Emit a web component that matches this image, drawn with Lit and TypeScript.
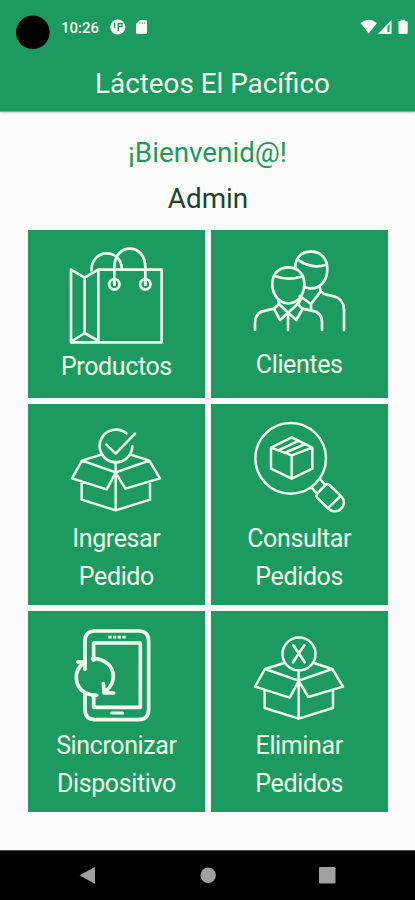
import { LitElement, html, css, svg } from "lit";
import { customElement } from "lit/decorators.js";

const bag = svg`
  <g stroke-width="8">
    <path d="M238 133H425V351H153V133L194 157L235 133V348M194 157V323M157 347L194 323L235 347"/>
    <path d="M214 135C215 70 301 66 306 131M283 165V126C283 51 376 51 376 126V165"/>
    <circle cx="283" cy="177" r="15.5"/><circle cx="376" cy="177" r="15.5"/>
    <path d="M283 164V178M376 164V178" stroke-width="9"/>
  </g>`;

const people = svg`
  <g stroke-width="8">
    <path d="M247 126C218 126 199 146 199 177C199 209 220 234 247 234C274 234 295 209 295 177C295 146 276 126 247 126Z"/>
    <path d="M207 152Q245 167 285 154"/>
    <path d="M268 131C266 99 285 79 315 79C346 79 364 101 364 131C364 164 345 189 315 189Q304 189 295 185"/>
    <path d="M275 103Q316 132 358 119"/>
    <path d="M147 314V293Q147 260 178 256L204 250L219 236L217 228M277 228L275 236L290 250L316 256Q348 260 348 290V314"/>
    <path d="M204 250L222 284L246 262L219 236M275 236L246 262L271 284L290 250M246 262V314"/>
    <path d="M341 184L344 198L315 236L281 212M315 236V252M344 198L354 206L384 213Q414 222 414 254V314M286 218L276 237"/>
  </g>`;

const box = svg`
  <path d="M244 166L186 184L156 237L260 270L287 220L316 268L420 237L388 184L332 166M186 184L287 219L388 184M185 246V301L287 333L390 301V246M287 187V333"/>`;

const boxCheck = svg`
  <g stroke-width="7.4">
    ${box}
    <path d="M319 102A49 49 0 1 0 337 141" stroke-width="8"/>
    <path d="M259 136L287 163L345 103"/>
  </g>`;

const boxCross = svg`
  <g stroke-width="7.4">
    <g transform="translate(-9 4)">${box}</g>
    <circle cx="279" cy="143" r="49.5"/>
    <path d="M262 117L296 168M295 117L261 168" stroke-width="8"/>
  </g>`;

const search = svg`
  <g stroke-width="7.4">
    <circle cx="254" cy="177" r="106"/>
    <path d="M195 145L257 114L319 145V208L257 238L195 208ZM195 145L257 168L319 145M257 168V238M217 153L279 124M235 161L298 134"/>
    <path d="M317 265L331 281M342 239L358 257"/>
    <path d="M334 283L359 256Q364 252 370 257L404 289C426 312 406 341 379 335Q374 333 368 329L333 295Q329 289 334 283ZM368 324L404 290"/>
  </g>`;

const phone = svg`
  <g stroke-width="11">
    <path d="M195 189V104Q195 74 225 74H355Q386 74 386 104V309Q386 340 355 340H225Q195 340 195 309V262"/>
    <path d="M221 162V110H361V303H221V266"/>
    <path d="M218 157C257 157 280 181 280 211Q280 235 257 254"/>
    <path d="M230 267C191 267 169 244 169 212Q169 188 190 170"/>
    <path d="M250 232L252 260H281M173 167H195V189"/>
    <path d="M252 244V260H268Z" fill="#eefff0" stroke-width="3"/>
    <path d="M275 320H308" stroke-width="9"/>
    <path d="M265 92.500H317" stroke-width="8" stroke-linecap="butt" stroke-dasharray="10 4"/>
  </g>`;

interface Tile {
  lines: string[];
  icon: unknown;
  left: number;
  variant: string;
}

const tiles: Tile[] = [
  { lines: ["Productos"], icon: bag, left: 24, variant: "products" },
  { lines: ["Clientes"], icon: people, left: 15, variant: "clients" },
  { lines: ["Ingresar", "Pedido"], icon: boxCheck, left: 24, variant: "middle" },
  { lines: ["Consultar", "Pedidos"], icon: search, left: 15, variant: "middle" },
  { lines: ["Sincronizar", "Dispositivo"], icon: phone, left: 24, variant: "bottom" },
  { lines: ["Eliminar", "Pedidos"], icon: boxCross, left: 15, variant: "bottom" },
];

@customElement("app-root")
export class AppRoot extends LitElement {
  static styles = css`
    :host {
      display: flex;
      flex-direction: column;
      height: 900px;
      width: 415px;
      overflow: hidden;
      background: #fbfbfb;
      font-family: Roboto, sans-serif;
    }
    * { box-sizing: border-box; }
    svg { display: block; }
    header {
      height: 112px;
      flex: none;
      background: #1c9a60;
      color: #f4ffee;
      border-bottom: 1px solid #68b68d;
      box-shadow: 0 1px 2px #0003;
    }
    .status { height: 56px; }
    .title {
      font-size: 27.8px;
      line-height: 56px;
      text-align: center;
      padding-left: 10px;
      white-space: nowrap;
    }
    .clock { font: 500 15px Roboto, sans-serif; fill: #f4ffee; }
    .welcome {
      height: 117.7px;
      flex: none;
      padding-top: 18px;
      text-align: center;
      font-size: 27.8px;
      line-height: 46px;
    }
    .greeting { color: #1e9a58; }
    .user { color: #1c4429; padding-left: 1px; }
    .grid {
      display: grid;
      grid-template-columns: 176.8px 176.8px;
      grid-template-rows: 168.8px 200.8px 201.2px;
      gap: 6px;
      margin-left: 28px;
      flex: 1;
      align-content: start;
    }
    .tile {
      background: #1c9a60;
      color: #f0ffe9;
      text-align: center;
      font-size: 25px;
      letter-spacing: -0.38px;
      line-height: 37.4px;
      overflow: hidden;
    }
    .icon {
      width: 177px;
      height: 115px;
      margin-bottom: 1px;
      fill: none;
      stroke: #eefff0;
      stroke-linejoin: round;
      stroke-linecap: round;
    }
    .products .icon { margin-bottom: 3px; }
    .nav {
      height: 50px;
      flex: none;
      background: #000;
      border-top: 1px solid #555;
    }
  `;

  render() {
    return html`
      <header>
        <svg class="status" width="415" height="56" fill="#f8fff4">
          <circle cx="32.8" cy="32.3" r="16.8" fill="#000" />
          <text class="clock" x="61" y="33" textLength="38" lengthAdjust="spacingAndGlyphs">10:26</text>
          <circle cx="117.8" cy="27" r="7.6" />
          <path d="M114.600 23V28M118.300 31V23.500H122V26.500H118.500" fill="none" stroke="#1c9a60" stroke-width="1.4" />
          <path d="M136 24L140 20H145.500Q147 20 147 21.500V32.500Q147 34 145.500 34H137.500Q136 34 136 32.500Z" />
          <path d="M140 22V24M142.200 22V24M144.400 22V24" stroke="#62b98c" />
          <path d="M360.500 23Q368.500 16.500 377 23L368.700 33.500Z" />
          <path d="M378 34L391.500 20V34Z" />
          <path d="M387.500 26V32H389.500V24Z" fill="#1c9a60" />
          <path d="M400.700 21H398.500V33Q398.500 34 399.500 34H406.500Q407.700 34 407.700 33V22Q407.700 21 406.500 21H405V19.700H400.700Z" />
        </svg>
        <div class="title">Lácteos El Pacífico</div>
      </header>
      <section class="welcome">
        <div class="greeting">¡Bienvenid@!</div>
        <div class="user">Admin</div>
      </section>
      <main class="grid">
        ${tiles.map(
          (t) => html`<div class="tile ${t.variant}">
            <svg class="icon" viewBox="${t.left} 14 531 345">${t.icon}</svg>
            ${t.lines.map((l) => html`<div>${l}</div>`)}
          </div>`
        )}
      </main>
      <svg class="nav" width="415" height="50" viewBox="0 0 415 49" fill="#a0a0a0">
        <path d="M79.500 24.200L95 16V33Z" />
        <circle cx="208.200" cy="24.200" r="7.700" />
        <rect x="319" y="16" width="16.500" height="16.500" rx="1.300" />
      </svg>
    `;
  }
}
